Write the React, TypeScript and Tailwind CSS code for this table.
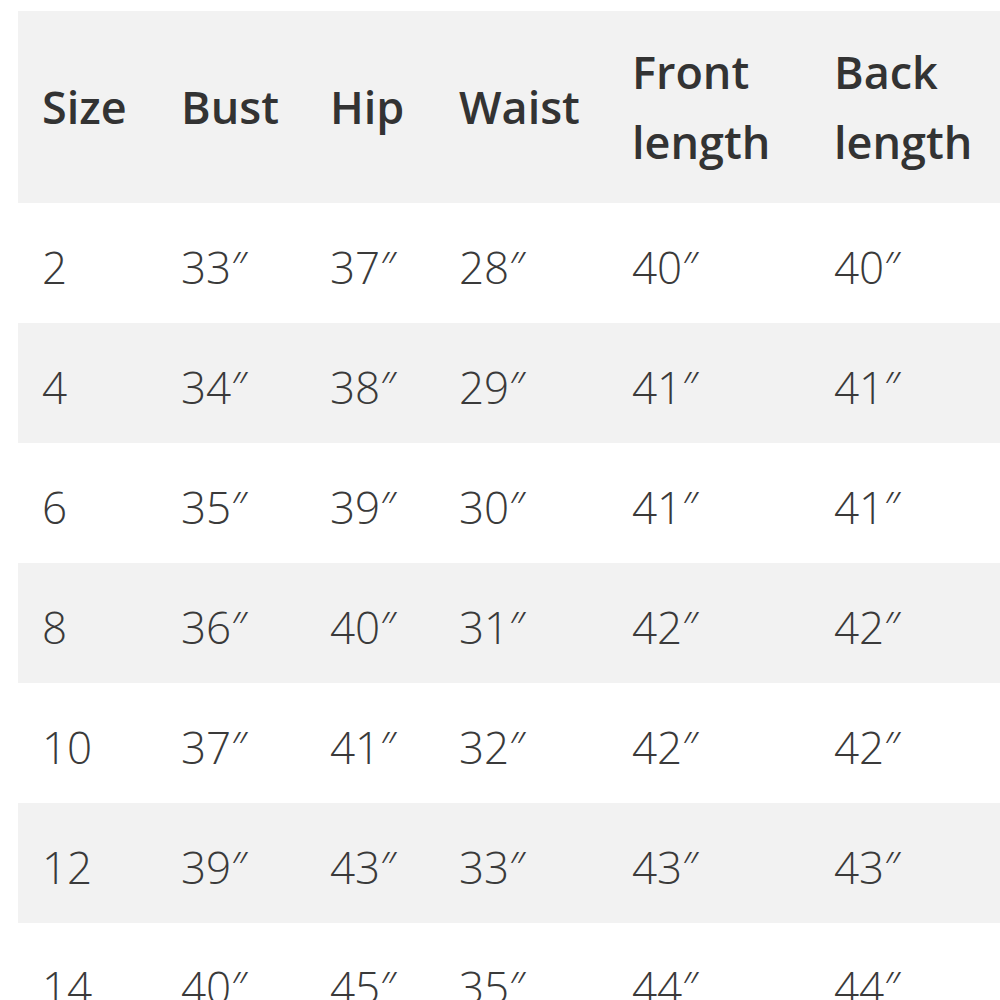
const headers = ['Size', 'Bust', 'Hip', 'Waist', 'Front length', 'Back length'];

const rows: string[][] = [
    ['2', '33″', '37″', '28″', '40″', '40″'],
    ['4', '34″', '38″', '29″', '41″', '41″'],
    ['6', '35″', '39″', '30″', '41″', '41″'],
    ['8', '36″', '40″', '31″', '42″', '42″'],
    ['10', '37″', '41″', '32″', '42″', '42″'],
    ['12', '39″', '43″', '33″', '43″', '43″'],
    ['14', '40″', '45″', '35″', '44″', '44″'],
];

const widths = ['w-[139px]', 'w-[149px]', 'w-[129px]', 'w-[173px]', 'w-[202px]', 'w-[220px]'];

export default function App() {
    return (
        <div className="h-[1000px] w-[1000px] overflow-hidden bg-white pl-[18px] pt-[11px] font-['Open_Sans',sans-serif]">
            <table className="w-[1012px] table-fixed border-collapse">
                <colgroup>
                    {widths.map((w, i) => (
                        <col key={i} className={w} />
                    ))}
                </colgroup>
                <thead>
                    <tr className="h-[192px] bg-[#f2f2f2]">
                        {headers.map((h) => (
                            <th
                                key={h}
                                className="pl-6 pr-2 text-left align-middle text-[45px] font-semibold leading-[70px] text-[#333333]"
                            >
                                {h}
                            </th>
                        ))}
                    </tr>
                </thead>
                <tbody>
                    {rows.map((row, r) => (
                        <tr key={row[0]} className={`h-[120px] ${r % 2 === 1 ? 'bg-[#f2f2f2]' : 'bg-white'}`}>
                            {row.map((cell, c) => (
                                <td
                                    key={c}
                                    className="pl-6 pt-[8px] align-middle text-[44px] font-[350] leading-none text-[#3a3a3a]"
                                >
                                    {cell}
                                </td>
                            ))}
                        </tr>
                    ))}
                </tbody>
            </table>
        </div>
    );
}
